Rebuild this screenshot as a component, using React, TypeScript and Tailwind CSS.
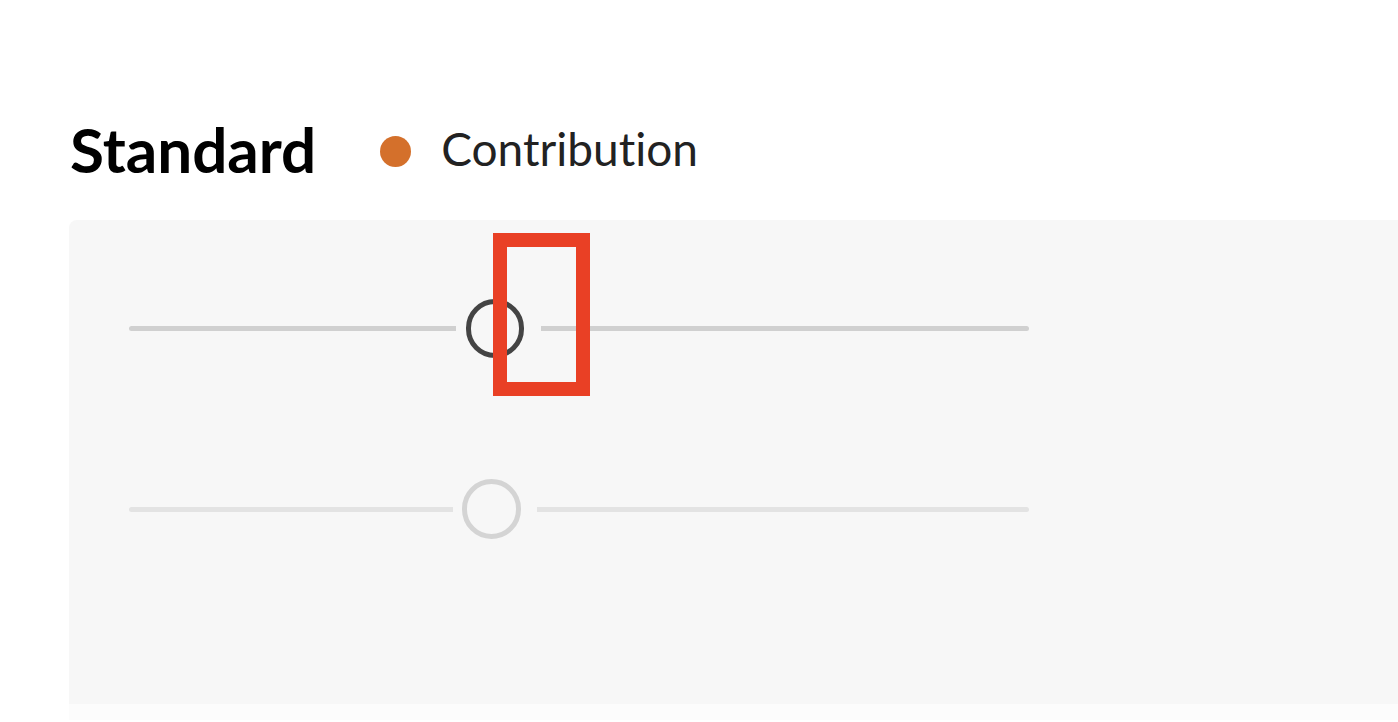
export default function App() {
  return (
    <div className="relative h-[722px] w-[1398px] overflow-hidden bg-white font-['Lato',sans-serif] [font-variant-ligatures:none]">
      <div className="flex items-center pl-[70px] pt-[110px]">
        <h1 className="text-[62px] font-bold leading-[78px] text-black">Standard</h1>
        <span className="ml-[64px] mt-[4px] h-[31px] w-[31px] rounded-full bg-[#d4702b]" />
        <span className="ml-[30px] text-[46px] leading-[78px] text-[#222]">Contribution</span>
      </div>

      <div className="ml-[69px] mt-[32px]">
        <div className="h-[484px] rounded-tl-lg bg-[#f7f7f7] pl-[60px] pt-[79px]">
          <div className="flex w-[900px] items-center">
            <div className="h-[5px] w-[327px] rounded-l-full bg-[#d0d0d0]" />
            <div className="ml-[10px] h-[59px] w-[58px] rounded-full border-[5px] border-[#444]" />
            <div className="ml-[17px] h-[5px] flex-1 rounded-r-full bg-[#d0d0d0]" />
          </div>
          <div className="mt-[121px] flex w-[900px] items-center">
            <div className="h-[5px] w-[324px] rounded-l-full bg-[#e3e3e3]" />
            <div className="ml-[9px] h-[60px] w-[59px] rounded-full border-[5px] border-[#d4d4d4]" />
            <div className="ml-[16px] h-[5px] flex-1 rounded-r-full bg-[#e3e3e3]" />
          </div>
        </div>
        <div className="h-[16px] bg-[#fcfcfc]" />
      </div>

      <div className="absolute left-[493px] top-[233px] h-[163px] w-[97px] border-[14px] border-[#e94025]" />
    </div>
  );
}
